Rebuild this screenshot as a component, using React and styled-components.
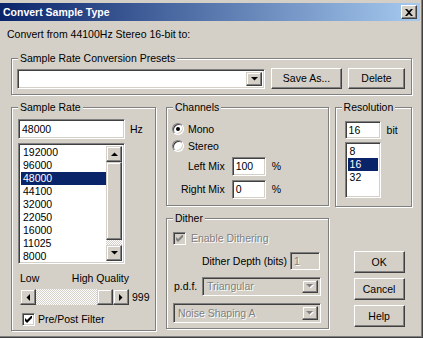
import React from "react"
import styled, { createGlobalStyle } from "styled-components"

const GlobalStyle = createGlobalStyle`
  html, body {
    margin: 0;
    padding: 0;
    background: #d4d0c8;
  }
  body {
    font-family: "Liberation Sans", Arial, sans-serif;
    font-size: 10.5px;
    color: #000;
  }
  * {
    box-sizing: border-box;
  }
`

const raisedButton = `
  border: 1px solid;
  border-color: #fff #404040 #404040 #fff;
  box-shadow: inset -1px -1px 0 #808080, inset 1px 1px 0 #d4d0c8;
  background: #d4d0c8;
`

const raisedScroll = `
  border: 1px solid;
  border-color: #d4d0c8 #404040 #404040 #d4d0c8;
  box-shadow: inset -1px -1px 0 #808080, inset 1px 1px 0 #fff;
  background: #d4d0c8;
`

const sunken = `
  border: 1px solid;
  border-color: #808080 #fff #fff #808080;
  box-shadow: inset 1px 1px 0 #404040, inset -1px -1px 0 #d4d0c8;
`

const Window = styled.div`
  width: 423px;
  height: 338px;
  background: #d4d0c8;
  padding: 3px 3px 0 0;
  box-shadow: inset -1px -1px 0 #404040, inset -2px -2px 0 #808080;
  display: flex;
  flex-direction: column;
`

const TitleBar = styled.div`
  height: 18px;
  background: linear-gradient(to right, #0a246a, #a6caf0);
  display: flex;
  align-items: center;
  justify-content: space-between;
  padding: 0 3px 0 3px;
  color: #fff;
  font-weight: bold;
`

const CloseButton = styled.div`
  width: 16px;
  height: 14px;
  ${raisedButton}
  display: flex;
  align-items: center;
  justify-content: center;
`

const Intro = styled.div`
  margin: 7px 0 0 7px;
  line-height: 13px;
`

const Group = styled.div`
  position: relative;
  border: 1px solid #808080;
  box-shadow: 1px 1px 0 #fff, inset 1px 1px 0 #fff;
`

const Caption = styled.span`
  position: absolute;
  top: -7px;
  left: 6px;
  padding: 0 2px;
  line-height: 13px;
  background: #d4d0c8;
  white-space: nowrap;
`

const PresetGroup = styled(Group)`
  margin: 17px 8px 0 11px;
  height: 37px;
  padding: 10px 6px 0 5px;
  display: flex;
  align-items: flex-start;
  gap: 6px;
`

const Combo = styled.div`
  flex: ${(p) => (p.$grow ? 1 : "none")};
  width: ${(p) => (p.$w ? `${p.$w}px` : "auto")};
  height: ${(p) => p.$h || 20}px;
  ${sunken}
  background: ${(p) => (p.$disabled ? "#d4d0c8" : "#fff")};
  padding: 2px;
  display: flex;
  align-items: center;
`

const ComboText = styled.span`
  flex: 1;
  padding-left: 2px;
  line-height: 13px;
  color: ${(p) => (p.$disabled ? "#808080" : "#000")};
  text-shadow: ${(p) => (p.$disabled ? "1px 1px 0 #fff" : "none")};
`

const DropButton = styled.div`
  width: 16px;
  align-self: stretch;
  ${raisedScroll}
  display: flex;
  align-items: center;
  justify-content: center;
`

const Button = styled.div`
  width: ${(p) => p.$w}px;
  height: ${(p) => p.$h || 21}px;
  margin-top: ${(p) => p.$mt || 0}px;
  ${raisedButton}
  display: flex;
  align-items: center;
  justify-content: center;
  line-height: 13px;
`

const MainRow = styled.div`
  display: flex;
  align-items: flex-start;
  margin: 12px 8px 0 11px;
`

const Column = styled.div`
  width: ${(p) => p.$w}px;
  margin-left: ${(p) => p.$ml || 0}px;
  display: flex;
  flex-direction: column;
`

const SampleRateGroup = styled(Group)`
  width: 146px;
  height: 224px;
  padding: 11px 0 0 6px;
  display: flex;
  flex-direction: column;
`

const EditRow = styled.div`
  display: flex;
  align-items: center;
  gap: ${(p) => p.$gap || 5}px;
`

const Edit = styled.div`
  width: ${(p) => p.$w}px;
  height: ${(p) => p.$h || 20}px;
  ${sunken}
  background: ${(p) => (p.$disabled ? "#d4d0c8" : "#fff")};
  color: ${(p) => (p.$disabled ? "#808080" : "#000")};
  text-shadow: ${(p) => (p.$disabled ? "1px 1px 0 #fff" : "none")};
  padding-left: 3px;
  display: flex;
  align-items: center;
  line-height: 13px;
`

const ListBox = styled.div`
  width: ${(p) => p.$w}px;
  height: ${(p) => p.$h}px;
  margin-top: ${(p) => p.$mt || 0}px;
  ${sunken}
  background: #fff;
  padding: 2px;
  display: flex;
  overflow: hidden;
`

const ListItems = styled.div`
  flex: 1;
  overflow: hidden;
`

const ListItem = styled.div`
  height: 13px;
  line-height: 13px;
  padding-left: 2px;
  background: ${(p) => (p.$selected ? "#0a246a" : "transparent")};
  color: ${(p) => (p.$selected ? "#fff" : "#000")};
`

const VScroll = styled.div`
  width: 16px;
  display: flex;
  flex-direction: column;
`

const HScroll = styled.div`
  width: 109px;
  height: 16px;
  display: flex;
`

const ScrollButton = styled.div`
  width: 16px;
  height: 16px;
  flex: none;
  ${raisedScroll}
  display: flex;
  align-items: center;
  justify-content: center;
`

const Thumb = styled.div`
  flex: none;
  width: ${(p) => (p.$horizontal ? "16px" : "auto")};
  height: ${(p) => (p.$horizontal ? "16px" : `${p.$size}px`)};
  ${raisedScroll}
`

const Track = styled.div`
  flex: 1;
  background-image: repeating-conic-gradient(#d4d0c8 0 25%, #fff 0 50%);
  background-size: 2px 2px;
`

const QualityLabels = styled.div`
  width: 109px;
  margin: 8px 0 0 2px;
  display: flex;
  justify-content: space-between;
  line-height: 13px;
`

const SliderRow = styled.div`
  display: flex;
  align-items: center;
  gap: 3px;
  margin: 4px 0 0 2px;
`

const CheckRow = styled.label`
  display: flex;
  align-items: center;
  gap: ${(p) => p.$gap || 3}px;
  margin: ${(p) => p.$m || "0"};
  line-height: 13px;
  color: ${(p) => (p.$disabled ? "#808080" : "#000")};
  text-shadow: ${(p) => (p.$disabled ? "1px 1px 0 #fff" : "none")};
`

const CheckBox = styled.span`
  width: 13px;
  height: 13px;
  ${sunken}
  background: ${(p) => (p.$disabled ? "#d4d0c8" : "#fff")};
  display: flex;
  align-items: center;
  justify-content: center;
  text-shadow: none;
`

const ChannelsGroup = styled(Group)`
  height: 99px;
  padding: 14px 0 0 5px;
  display: flex;
  flex-direction: column;
  gap: 4px;
`

const RadioRow = styled.div`
  display: flex;
  align-items: center;
  gap: 4px;
  height: 13px;
`

const Radio = styled.span`
  width: 12px;
  height: 12px;
  border-radius: 50%;
  border: 1px solid;
  border-color: #808080 #fff #fff #808080;
  box-shadow: inset 1px 1px 0 #404040, inset -1px -1px 0 #d4d0c8;
  background: #fff;
  display: flex;
  align-items: center;
  justify-content: center;
  &::after {
    content: "";
    width: 4px;
    height: 4px;
    border-radius: 50%;
    background: ${(p) => (p.$checked ? "#000" : "transparent")};
  }
`

const MixGrid = styled.div`
  display: grid;
  grid-template-columns: auto 34px auto;
  column-gap: 6px;
  row-gap: 4px;
  align-items: center;
  margin: 1px 0 0 9px;
  justify-content: start;
  line-height: 13px;
`

const MixLabel = styled.span`
  text-align: right;
  padding-right: 1px;
`

const DitherGroup = styled(Group)`
  margin-top: 12px;
  height: 111px;
  padding: 13px 0 0 6px;
  display: flex;
  flex-direction: column;
  align-items: flex-start;
  gap: 7px;
`

const FieldRow = styled.div`
  display: flex;
  align-items: center;
  gap: 3px;
  margin-left: ${(p) => p.$ml || 0}px;
  line-height: 13px;
`

const FieldLabel = styled.span`
  width: ${(p) => (p.$w ? `${p.$w}px` : "auto")};
`

const ResolutionGroup = styled(Group)`
  height: 100px;
  padding: 13px 0 0 9px;
  display: flex;
  flex-direction: column;
`

const ButtonStack = styled.div`
  display: flex;
  flex-direction: column;
  gap: 5px;
  margin: 44px 0 0 19px;
`

const Arrow = ({ dir, color = "#000" }) => {
  const shapes = {
    up: "0,4 7,4 3.5,0.5",
    down: "0,0 7,0 3.5,3.5",
    left: "4,0 4,7 0.5,3.5",
    right: "0,0 0,7 3.5,3.5",
  }
  const vertical = dir === "up" || dir === "down"
  return (
    <svg width={vertical ? 7 : 4} height={vertical ? 4 : 7} viewBox={vertical ? "0 0 7 4" : "0 0 4 7"}>
      <polygon points={shapes[dir]} fill={color} />
    </svg>
  )
}

const DisabledArrow = () => (
  <svg width="8" height="5" viewBox="0 0 8 5">
    <polygon points="1,1 8,1 4.5,4.5" fill="#fff" />
    <polygon points="0,0 7,0 3.5,3.5" fill="#808080" />
  </svg>
)

const CheckMark = ({ color = "#000" }) => (
  <svg width="7" height="7" viewBox="0 0 7 7">
    <path d="M0 2 L2 4 L7 -1 L7 2 L2 7 L0 5 Z" fill={color} />
  </svg>
)

const sampleRates = ["192000", "96000", "48000", "44100", "32000", "22050", "16000", "11025", "8000", "6000"]
const resolutions = ["8", "16", "32"]

const App = () => {
  return (
    <>
      <GlobalStyle />
      <Window>
        <TitleBar>
          <span>Convert Sample Type</span>
          <CloseButton>
            <svg width="8" height="7" viewBox="0 0 8 7">
              <path d="M0 0 L2 0 L4 2 L6 0 L8 0 L5 3.5 L8 7 L6 7 L4 5 L2 7 L0 7 L3 3.5 Z" fill="#000" />
            </svg>
          </CloseButton>
        </TitleBar>

        <Intro>Convert from 44100Hz Stereo 16-bit to:</Intro>

        <PresetGroup>
          <Caption>Sample Rate Conversion Presets</Caption>
          <Combo $grow>
            <ComboText />
            <DropButton>
              <Arrow dir="down" />
            </DropButton>
          </Combo>
          <Button $w={71} $mt={-1}>Save As...</Button>
          <Button $w={57} $mt={-1}>Delete</Button>
        </PresetGroup>

        <MainRow>
          <SampleRateGroup>
            <Caption>Sample Rate</Caption>
            <EditRow $gap={5}>
              <Edit $w={107}>48000</Edit>
              <span>Hz</span>
            </EditRow>
            <ListBox $w={107} $h={121} $mt={4}>
              <ListItems>
                {sampleRates.map((rate) => (
                  <ListItem key={rate} $selected={rate === "48000"}>
                    {rate}
                  </ListItem>
                ))}
              </ListItems>
              <VScroll>
                <ScrollButton>
                  <Arrow dir="up" />
                </ScrollButton>
                <Thumb $size={78} />
                <Track />
                <ScrollButton>
                  <Arrow dir="down" />
                </ScrollButton>
              </VScroll>
            </ListBox>
            <QualityLabels>
              <span>Low</span>
              <span>High Quality</span>
            </QualityLabels>
            <SliderRow>
              <HScroll>
                <ScrollButton>
                  <Arrow dir="left" />
                </ScrollButton>
                <Track />
                <Thumb $horizontal />
                <ScrollButton>
                  <Arrow dir="right" />
                </ScrollButton>
              </HScroll>
              <span>999</span>
            </SliderRow>
            <CheckRow $m="8px 0 0 4px">
              <CheckBox>
                <CheckMark />
              </CheckBox>
              <span>Pre/Post Filter</span>
            </CheckRow>
          </SampleRateGroup>

          <Column $w={164} $ml={10}>
            <ChannelsGroup>
              <Caption>Channels</Caption>
              <RadioRow>
                <Radio $checked />
                <span>Mono</span>
              </RadioRow>
              <RadioRow>
                <Radio />
                <span>Stereo</span>
              </RadioRow>
              <MixGrid>
                <MixLabel>Left Mix</MixLabel>
                <Edit $w={34} $h={19}>100</Edit>
                <span>%</span>
                <MixLabel>Right Mix</MixLabel>
                <Edit $w={34} $h={19}>0</Edit>
                <span>%</span>
              </MixGrid>
            </ChannelsGroup>

            <DitherGroup>
              <Caption>Dither</Caption>
              <CheckRow $gap={5} $disabled>
                <CheckBox $disabled>
                  <CheckMark color="#808080" />
                </CheckBox>
                <span>Enable Dithering</span>
              </CheckRow>
              <FieldRow $ml={29}>
                <span>Dither Depth (bits)</span>
                <Edit $w={30} $h={18} $disabled>1</Edit>
              </FieldRow>
              <FieldRow $ml={1}>
                <FieldLabel $w={25}>p.d.f.</FieldLabel>
                <Combo $w={119} $h={19} $disabled>
                  <ComboText $disabled>Triangular</ComboText>
                  <DropButton>
                    <DisabledArrow />
                  </DropButton>
                </Combo>
              </FieldRow>
              <Combo $w={148} $h={20} $disabled>
                <ComboText $disabled>Noise Shaping A</ComboText>
                <DropButton>
                  <DisabledArrow />
                </DropButton>
              </Combo>
            </DitherGroup>
          </Column>

          <Column $w={78} $ml={6}>
            <ResolutionGroup>
              <Caption>Resolution</Caption>
              <EditRow $gap={6}>
                <Edit $w={36} $h={18}>16</Edit>
                <span>bit</span>
              </EditRow>
              <ListBox $w={36} $h={56} $mt={3}>
                <ListItems>
                  {resolutions.map((bits) => (
                    <ListItem key={bits} $selected={bits === "16"}>
                      {bits}
                    </ListItem>
                  ))}
                </ListItems>
              </ListBox>
            </ResolutionGroup>
            <ButtonStack>
              <Button $w={51} $h={22}>OK</Button>
              <Button $w={51} $h={22}>Cancel</Button>
              <Button $w={51} $h={22}>Help</Button>
            </ButtonStack>
          </Column>
        </MainRow>
      </Window>
    </>
  )
}

export default App
